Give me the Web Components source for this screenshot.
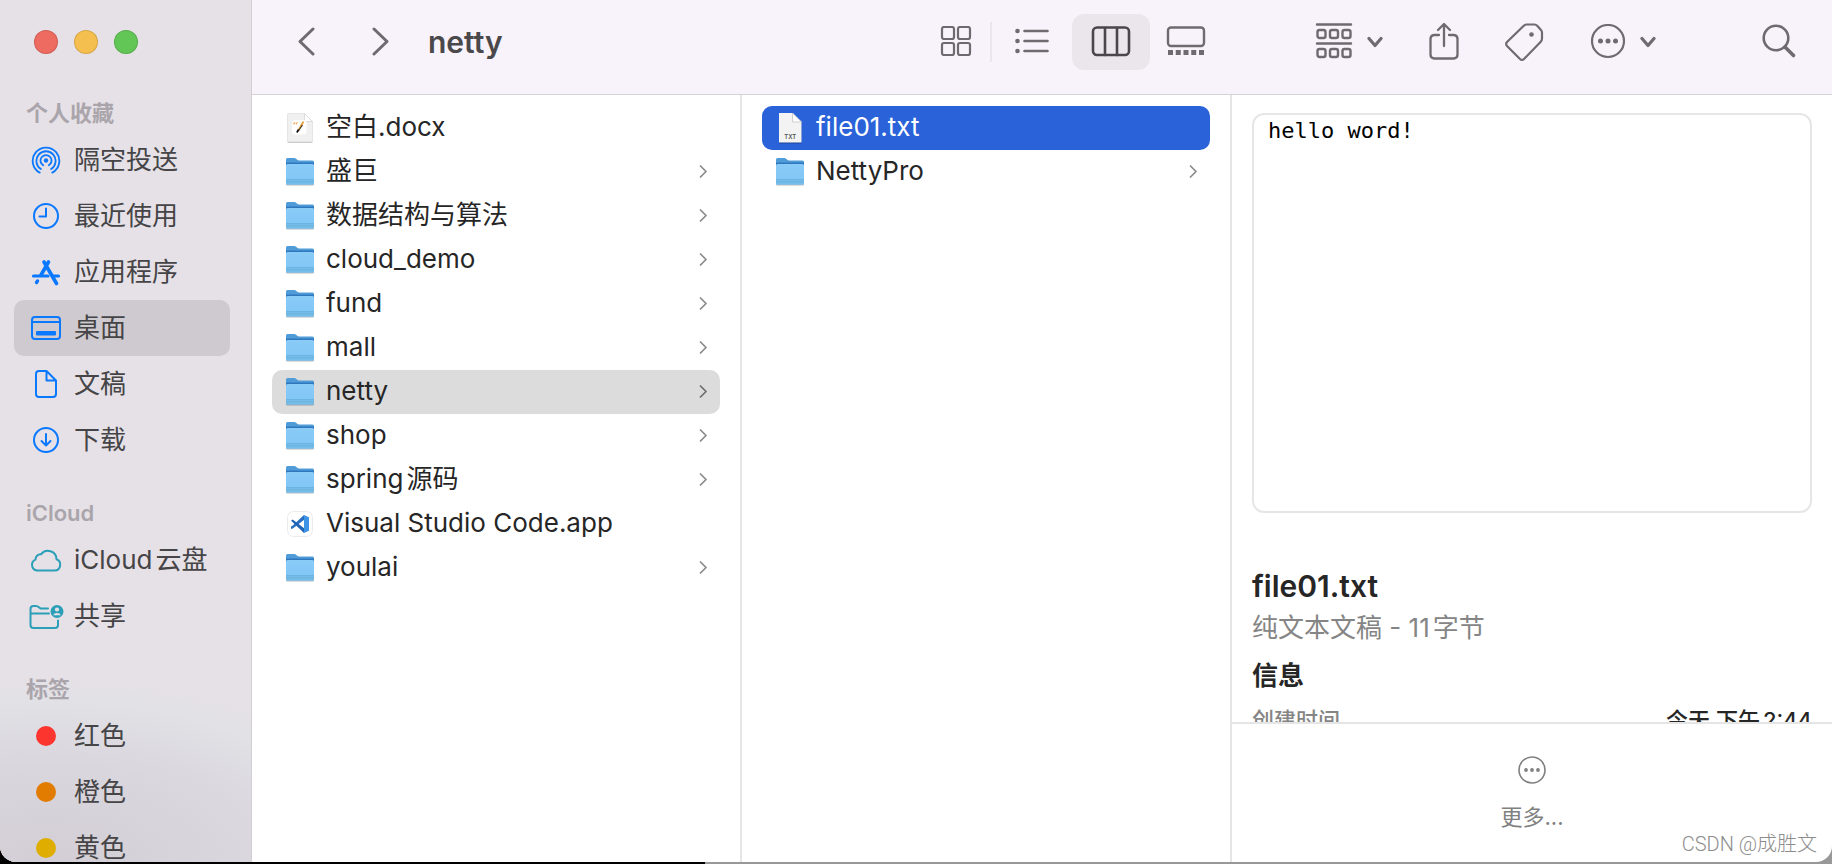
<!DOCTYPE html>
<html lang="zh-CN">
<head>
<meta charset="utf-8">
<title>netty</title>
<style>
  html, body { margin: 0; height: 100%; }
  body {
    background: linear-gradient(to right, #000 38.5%, #989898 38.5%);
    font-family: Inter, "Noto Sans CJK SC", sans-serif;
    color: #262626;
    overflow: hidden;
  }
  /* gap between Latin and Chinese runs */
  .cjk { margin-left: 3px; }
</style>
</head>
<body>
<finder-window>
  <finder-sidebar slot="sidebar">
    <sidebar-section heading="个人收藏">
      <sidebar-item icon="airdrop">隔空投送</sidebar-item>
      <sidebar-item icon="clock">最近使用</sidebar-item>
      <sidebar-item icon="apps">应用程序</sidebar-item>
      <sidebar-item icon="desktop" current>桌面</sidebar-item>
      <sidebar-item icon="doc">文稿</sidebar-item>
      <sidebar-item icon="download">下载</sidebar-item>
    </sidebar-section>
    <sidebar-section heading="iCloud" class="teal">
      <sidebar-item icon="cloud">iCloud<span class="cjk">云盘</span></sidebar-item>
      <sidebar-item icon="shared">共享</sidebar-item>
    </sidebar-section>
    <sidebar-section heading="标签">
      <sidebar-item icon="dot" style="--tint:#fc352f">红色</sidebar-item>
      <sidebar-item icon="dot" style="--tint:#e27c00">橙色</sidebar-item>
      <sidebar-item icon="dot" style="--tint:#dfad00">黄色</sidebar-item>
    </sidebar-section>
  </finder-sidebar>
  <finder-toolbar slot="toolbar">netty</finder-toolbar>
  <file-column label="桌面">
    <file-row icon="docx">空白.docx</file-row>
    <file-row icon="folder">盛巨</file-row>
    <file-row icon="folder">数据结构与算法</file-row>
    <file-row icon="folder">cloud_demo</file-row>
    <file-row icon="folder">fund</file-row>
    <file-row icon="folder">mall</file-row>
    <file-row icon="folder" state="open">netty</file-row>
    <file-row icon="folder">shop</file-row>
    <file-row icon="folder">spring<span class="cjk">源码</span></file-row>
    <file-row icon="vscode">Visual Studio Code.app</file-row>
    <file-row icon="folder">youlai</file-row>
  </file-column>
  <file-column label="netty">
    <file-row icon="txt" state="selected">file01.txt</file-row>
    <file-row icon="folder">NettyPro</file-row>
  </file-column>
  <file-preview>
    <span slot="content">hello word!</span>
    <span slot="name">file01.txt</span>
    <span slot="kind">纯文本文稿 - 11<span class="cjk">字节</span></span>
    <span slot="created">今天 下午<span class="cjk">2:44</span></span>
  </file-preview>
</finder-window>
<page-watermark>CSDN @成胜文</page-watermark>

<script>
const line = (w, h, body, sw = 2) =>
  `<svg width="${w}" height="${h}" viewBox="0 0 ${w} ${h}" fill="none" stroke="currentColor" stroke-width="${sw}" stroke-linecap="round" stroke-linejoin="round" aria-hidden="true">${body}</svg>`;

const ICONS = {
  airdrop: line(30, 30, `<circle cx="15" cy="15.500" r="2.200" fill="currentColor" stroke="none"/>
    <path d="M12.200 20.300A5.500 5.500 0 1 1 17.800 20.300M9.900 24A9.600 9.600 0 1 1 20.100 24M8.700 27.600A13.300 13.300 0 1 1 21.300 27.600"/>`, 1.8),
  clock: line(30, 30, `<circle cx="15" cy="15" r="12"/><path d="M15 7.500V15.500H8.500"/>`),
  apps: line(30, 30, `<path d="M17.500 5L10 18M13 5L25.500 26.500" stroke-width="3.600"/><path d="M2.500 19H17M22 19H27.500" stroke-width="3.200"/><path d="M6.500 24L5.500 25.500" stroke-width="3.400"/>`),
  desktop: line(32, 30, `<rect x="2" y="4" width="28" height="22" rx="3"/><path d="M2 9H30"/><rect x="6" y="18" width="20" height="4.500" rx="1" fill="currentColor" stroke="none"/>`),
  doc: line(30, 30, `<path d="M8 2H15.500L25 11.500V25A3 3 0 0 1 22 28H8A3 3 0 0 1 5 25V5A3 3 0 0 1 8 2ZM15.500 2V11.500H25"/>`),
  download: line(30, 30, `<circle cx="15" cy="15" r="12"/><path d="M15 9V20.500M10.500 16L15 20.500L19.500 16"/>`),
  cloud: line(34, 30, `<path d="M8 25.500H25.500A5.800 5.800 0 0 0 27.500 14.300A8.600 8.600 0 0 0 12 9.300A5 5 0 0 0 6.500 14.600A5.700 5.700 0 0 0 8 25.500Z"/>`),
  shared: line(36, 30, `<path d="M20 7.500H12.500C10.500 6 10 5 8 5H5.500A3 3 0 0 0 2.500 8V24A3 3 0 0 0 5.500 27H27A3 3 0 0 0 30 24V19.500M2.500 12.500H21"/><circle cx="29" cy="10.500" r="6.500" fill="currentColor" stroke="none"/><circle cx="29" cy="8.500" r="2.100" fill="#e6e1e7" stroke="none"/><path d="M25.200 14.200A3.900 3 0 0 1 32.800 14.200Z" fill="#e6e1e7" stroke="none"/>`),
  dot: `<svg width="20" height="20" viewBox="0 0 20 20" aria-hidden="true"><circle cx="10" cy="10" r="10" fill="currentColor"/></svg>`,
  back: line(18, 30, `<path d="M15 2L2 14.500L15 27"/>`, 3),
  forward: line(18, 30, `<path d="M3 2L16 14.500L3 27"/>`, 3),
  grid: line(32, 32, `<rect x="2" y="1" width="12" height="12" rx="2"/><rect x="18" y="1" width="12" height="12" rx="2"/><rect x="2" y="17" width="12" height="12" rx="2"/><rect x="18" y="17" width="12" height="12" rx="2"/>`, 2.2),
  list: line(36, 32, `<path d="M10.500 5H33.500M10.500 15H33.500M10.500 25H33.500" stroke-width="2.600"/><g fill="currentColor" stroke="none"><circle cx="3.500" cy="5" r="2.300"/><circle cx="3.500" cy="15" r="2.300"/><circle cx="3.500" cy="25" r="2.300"/></g>`),
  columns: line(40, 32, `<rect x="2" y="1.500" width="36" height="27.500" rx="4"/><path d="M14 2V29M26 2V29"/>`, 2.6),
  gallery: line(40, 32, `<rect x="2" y="1.500" width="36" height="18.500" rx="3"/><path d="M2 26.500H39" stroke-width="5" stroke-linecap="butt" stroke-dasharray="5 2.750"/>`, 2.400),
  group: line(38, 38, `<path d="M2 1.500H36M2 20.500H36"/>${[6.5, 25.5].map(y => [2.5, 15, 27.5].map(x => `<rect x="${x}" y="${y + .5}" width="8" height="8" rx="2"/>`).join('')).join('')}`, 2.4),
  caret: line(16, 12, `<path d="M2 2.500L8 9.500L14 2.500"/>`, 3.200),
  share: line(32, 40, `<path d="M11 13H6A4 4 0 0 0 2.500 16.500V32.500A4 4 0 0 0 6 36.500H26A4 4 0 0 0 29.500 32.500V16.500A4 4 0 0 0 26 13H21M16 24V2.500M10 8L16 2L22 8"/>`, 2.300),
  tag: line(40, 40, `<path d="M21.500 2.500H29.500Q31 2.500 32.200 3.700L35.800 7.800Q37 9 37 10.500V16.500Q37 18.500 35.500 20L19 37Q17 38.800 15 37L2 24Q.3 22 2 20L18.500 4Q20 2.500 21.500 2.500Z"/><circle cx="26.500" cy="12.500" r="2.300" fill="currentColor" stroke="none"/>`, 2.200),
  more: line(36, 36, `<circle cx="18" cy="17" r="16"/><g fill="currentColor" stroke="none"><circle cx="10.500" cy="17" r="2.500"/><circle cx="18" cy="17" r="2.500"/><circle cx="25.500" cy="17" r="2.500"/></g>`, 2.200),
  search: line(36, 36, `<circle cx="15" cy="14" r="12.300" stroke-width="2.600"/><path d="M24 23L32.500 31.500" stroke-width="3.600"/>`),
  ellipsis: line(30, 30, `<circle cx="15" cy="15" r="13"/><g fill="currentColor" stroke="none"><circle cx="9" cy="15" r="1.900"/><circle cx="15" cy="15" r="1.900"/><circle cx="21" cy="15" r="1.900"/></g>`, 1.600),
  disclose: line(10, 14, `<path d="M1.500 1L7 6.500L1.500 12"/>`, 1.700),
  folder: `<svg width="32" height="32" viewBox="0 0 32 32" aria-hidden="true">
    <defs><linearGradient id="f" x1="0" y1="0" x2="0" y2="1"><stop offset="0" stop-color="#8acbf7"/><stop offset="1" stop-color="#7fc5f5"/></linearGradient></defs>
    <path d="M3 28.500H29" stroke="#0004" stroke-width="2" stroke-linecap="round"/>
    <path d="M2 3.500A1.500 1.500 0 0 1 3.500 2H10.500C12.500 2 12.800 4.500 15 4.500H28.500A1.500 1.500 0 0 1 30 6V14H2Z" fill="#4f9cd8"/>
    <path d="M2 6.500H30V10H2Z" fill="#2f78bf"/>
    <path d="M2 9.500A1.500 1.500 0 0 1 3.500 8H28.500A1.500 1.500 0 0 1 30 9.500V27A1.500 1.500 0 0 1 28.500 28.500H3.500A1.500 1.500 0 0 1 2 27Z" fill="url(#f)"/>
    <path d="M2 24H30V27A1.500 1.500 0 0 1 28.500 28.500H3.500A1.500 1.500 0 0 1 2 27Z" fill="#76bce9"/>
    <path d="M2 23.500H30M2 25.800H30" stroke="#64add9" stroke-width=".7"/></svg>`,
  docx: `<svg width="32" height="32" viewBox="0 0 32 32" aria-hidden="true">
    <path d="M3.500 30.500H28.500" stroke="#0003"/>
    <path d="M4.500 1.500H20.500L28.500 9.500V29.500H3.500V2.500A1 1 0 0 1 4.500 1.500Z" fill="#f0f0f0" stroke="#e0e0e0" stroke-width=".8"/>
    <path d="M20.500 1.500L28.500 9.500H20.500Z" fill="#fff" stroke="#d5d5d5" stroke-width=".8"/>
    <rect x="8" y="8" width="14.500" height="14.500" rx="3.500" fill="#fff"/>
    <path d="M9.800 12.500V11.500L11 10.300M12.300 12.500V11.500L13.500 10.300" stroke="#f3a65b" stroke-width="1.200" fill="none"/>
    <path d="M19.500 9.500L14.500 18" stroke="#e6a23c" stroke-width="1.800"/><path d="M18.500 13L14 19.500" stroke="#443b33" stroke-width="1.200"/><path d="M14.500 17.500L12.800 20.500" stroke="#111" stroke-width="1.600"/></svg>`,
  txt: `<svg width="32" height="32" viewBox="0 0 32 32" aria-hidden="true">
    <path d="M5 1H18.500L27.500 10V30.500H5Z" fill="#10204a" opacity=".45" transform="translate(0 1)"/>
    <path d="M5 1H18.500L27.500 10V30.500H5Z" fill="#f3f3f3"/><path d="M18.500 1L27.500 10H18.500Z" fill="#fff" stroke="#c4c4c4" stroke-width=".8"/>
    <text x="16.300" y="27" text-anchor="middle" font-family="Inter, sans-serif" font-size="6" font-weight="600" fill="#555">TXT</text></svg>`,
  vscode: `<svg width="32" height="32" viewBox="0 0 32 32" aria-hidden="true">
    <rect x="3.500" y="3.500" width="25" height="25" rx="6" fill="#fff" stroke="#ececec"/>
    <path d="M20 7L8.500 17.800L7 18.500V21L8.800 20.500L20.500 11.500Z" fill="#2a6fc0"/>
    <path d="M20 25L8.500 14L7 12.800L8.700 11.500L20.500 20.500Z" fill="#2264b4"/>
    <path d="M20 7L25 9.300V22.700L20 25Z" fill="#3d93e6"/></svg>`
};

class Base extends HTMLElement {
  connectedCallback() {
    if (this.shadowRoot) return;
    this.attachShadow({ mode: 'open' }).innerHTML =
      `<style>*{box-sizing:border-box}button{font:inherit;color:inherit;border:0;background:none;padding:0;margin:0}svg{display:block}${this.css()}</style>${this.html()}`;
  }
}

customElements.define('ui-icon', class extends Base {
  css() { return `:host{display:flex;flex:none;align-items:center;justify-content:center}`; }
  html() { return ICONS[this.getAttribute('name')]; }
});

customElements.define('finder-window', class extends Base {
  css() { return `
    :host{display:grid;grid-template-columns:252px minmax(0,1fr);grid-template-rows:minmax(0,1fr);height:calc(100vh - 2px);background:#fff;border-radius:0 0 16px 16px;overflow:hidden}
    main{display:grid;grid-template-rows:95px minmax(0,1fr);min-width:0}
    .columns{display:grid;grid-template-columns:49fr 49fr 60fr;grid-template-rows:minmax(0,1fr);min-height:0}`; }
  html() { return `<slot name="sidebar"></slot><main><slot name="toolbar"></slot><div class="columns"><slot></slot></div></main>`; }
});

customElements.define('finder-sidebar', class extends Base {
  css() { return `
    :host{display:block;overflow:hidden;border-right:1px solid #d3ced4;color:#454446;
      background:radial-gradient(ellipse 150% 22% at 20% 100%,#d3ced6 0,#d9d6dd 50%,#e1e1e6 85%,#e6e1e700 100%) , #e6e1e7}
    .lights{display:flex;gap:16px;padding:30px 34px 14px}
    .lights button{width:24px;height:24px;border-radius:50%;border:1px solid #0002}
    .r{background:#ed6b60}.y{background:#f5bf4f}.g{background:#62c656}
    ::slotted(sidebar-section){--tint:#0a78ff}
    ::slotted(.teal){--tint:#2b9fb8}`; }
  html() { return `<div class="lights"><button class="r" aria-label="关闭"></button><button class="y" aria-label="最小化"></button><button class="g" aria-label="缩放"></button></div><nav><slot></slot></nav>`; }
});

customElements.define('sidebar-section', class extends Base {
  css() { return `
    :host{display:block}
    h2{margin:0;height:64px;padding:31px 26px 0;font-size:22px;line-height:28px;font-weight:600;color:#aaa5ab}`; }
  html() { return `<h2>${this.getAttribute('heading')}</h2><slot></slot>`; }
});

customElements.define('sidebar-item', class extends Base {
  css() { return `
    :host{display:block;padding:0 21px 0 14px}
    a{display:flex;align-items:center;gap:10px;height:56px;padding-left:14px;border-radius:10px;color:inherit;text-decoration:none;font-size:26px;line-height:28px;white-space:nowrap}
    :host([current]) a{background:#cfcad0}
    ui-icon{width:36px;color:var(--tint)}`; }
  html() { return `<a href="#"><ui-icon name="${this.getAttribute('icon')}"></ui-icon><span><slot></slot></span></a>`; }
});

customElements.define('tool-button', class extends Base {
  css() { return `
    :host{display:block;flex:none}
    button{display:flex;align-items:center;justify-content:center;gap:14px;height:56px;border-radius:12px;color:inherit}
    :host([view]) button{width:var(--view-width,78px)}
    :host([pressed]) button{background:#ebe6ec;color:#4a474b}`; }
  html() {
    const menu = this.hasAttribute('menu') ? '<ui-icon name="caret"></ui-icon>' : '';
    return `<button aria-label="${this.getAttribute('label')}"><ui-icon name="${this.getAttribute('icon')}"></ui-icon>${menu}</button>`;
  }
});

customElements.define('finder-toolbar', class extends Base {
  css() { return `
    :host{display:flex;align-items:flex-start;justify-content:space-between;padding:14px 35px 0 46px;background:#f8f3fa;border-bottom:1px solid #d6d3d7;color:#6f6a70}
    div{display:flex;align-items:center;height:56px}
    .nav{gap:55px}
    h1{margin:0 0 0 -16px;font-size:30px;line-height:36px;font-weight:600;color:#4a484b}
    .right{gap:93px}
    .views hr{width:2px;height:40px;margin:0;border:0;background:#ebe6ec}
    .views tool-button:first-child{--view-width:68px}
    .views hr + tool-button{--view-width:80px}
    .views tool-button:last-child{--view-width:72px}
    .actions{gap:45px}
    .actions tool-button:last-child{margin-left:60px}`; }
  html() { return `
    <div class="nav"><tool-button icon="back" label="后退"></tool-button><tool-button icon="forward" label="前进"></tool-button><h1><slot></slot></h1></div>
    <div class="right">
      <div class="views"><tool-button view icon="grid" label="图标"></tool-button><hr><tool-button view icon="list" label="列表"></tool-button><tool-button view pressed icon="columns" label="分栏"></tool-button><tool-button view icon="gallery" label="画廊"></tool-button></div>
      <div class="actions"><tool-button menu icon="group" label="分组"></tool-button><tool-button icon="share" label="共享"></tool-button><tool-button icon="tag" label="标签"></tool-button><tool-button menu icon="more" label="操作"></tool-button><tool-button icon="search" label="搜索"></tool-button></div>
    </div>`; }
});

customElements.define('file-column', class extends Base {
  css() { return `:host{display:block;min-width:0;padding:11px 20px 0;border-right:2px solid #e5e5e5}`; }
  html() { return `<section aria-label="${this.getAttribute('label')}"><slot></slot></section>`; }
});

customElements.define('file-row', class extends Base {
  css() { return `
    :host{display:block}
    button{display:flex;align-items:center;width:100%;height:44px;padding:0 11px 0 12px;border-radius:10px;font-size:26px;line-height:28px;text-align:left;white-space:nowrap}
    span{flex:1;margin-left:10px;padding-bottom:3px}
    .more{color:#8a8a8a}
    :host([state=open]) button{background:#dcdcdc}
    :host([state=open]) .more{color:#6c6c6c}
    :host([state=selected]) button{background:#2962d9;color:#fff}`; }
  html() {
    const icon = this.getAttribute('icon');
    return `<button><ui-icon name="${icon}"></ui-icon><span><slot></slot></span>${icon === 'folder' ? '<ui-icon class="more" name="disclose"></ui-icon>' : ''}</button>`;
  }
});

customElements.define('file-preview', class extends Base {
  css() { return `
    :host{display:grid;grid-template-rows:minmax(0,1fr) 140px;min-width:0;min-height:0}
    .info{overflow:hidden;padding:18px 20px 0}
    pre{margin:0;height:400px;padding:2px 14px;border:2px solid #e6e6e6;border-radius:12px;font:22px/28px "DejaVu Sans Mono",monospace;color:#000}
    h2{margin:53px 0 0;font-size:30px;line-height:40px;font-weight:600}
    p{margin:0;font-size:26px;line-height:44px;color:#858585}
    h3{margin:4px 0 0;font-size:26px;line-height:44px;font-weight:600}
    dl{display:flex;justify-content:space-between;margin:6px 0 0;font-size:22px;line-height:32px;font-weight:500}
    dt{color:#858585}dd{margin:0}
    footer{display:flex;justify-content:center;border-top:2px solid #e5e5e5;color:#808080}
    footer button{display:flex;flex-direction:column;align-items:center;gap:18px;padding-top:31px;font-size:22px;line-height:28px}`; }
  html() { return `
    <div class="info"><pre><slot name="content"></slot></pre><h2><slot name="name"></slot></h2><p><slot name="kind"></slot></p><h3>信息</h3>
    <dl><dt>创建时间</dt><dd><slot name="created"></slot></dd></dl></div>
    <footer><button><ui-icon name="ellipsis"></ui-icon>更多...</button></footer>`; }
});

customElements.define('page-watermark', class extends Base {
  css() { return `:host{position:absolute;right:15px;bottom:5px;font:300 20px/30px Roboto,"Noto Sans CJK SC",sans-serif;color:#8c8c8c;pointer-events:none}`; }
  html() { return `<slot></slot>`; }
});
</script>
</body>
</html>
